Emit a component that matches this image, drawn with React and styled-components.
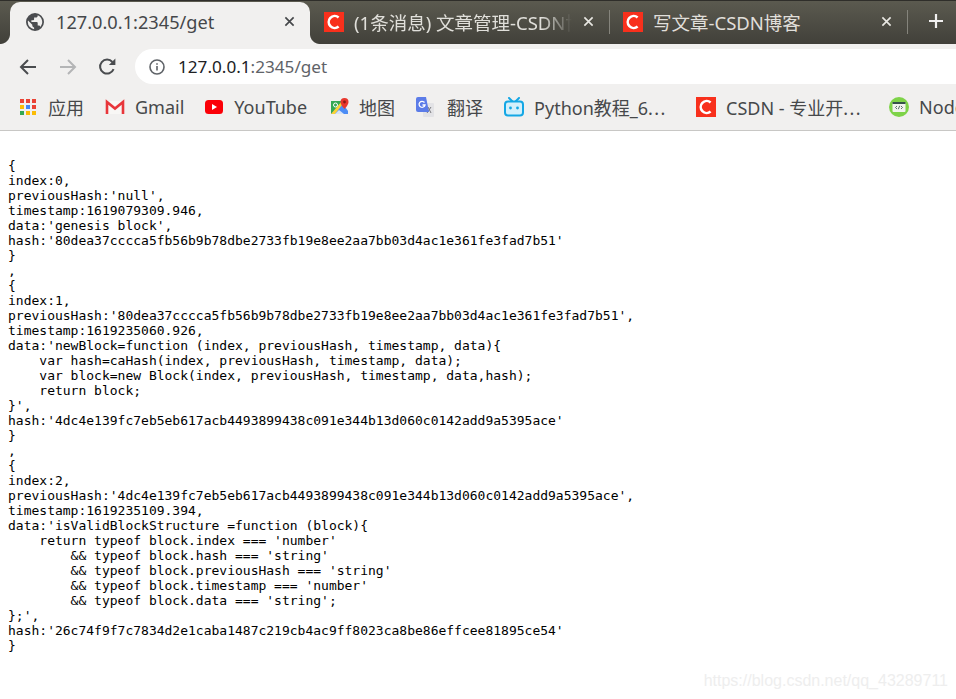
import React from "react";
import styled, { createGlobalStyle } from "styled-components";

const GlobalStyle = createGlobalStyle`
  html, body {
    margin: 0;
    padding: 0;
    background: #fff;
  }
`;

const Window = styled.div`
  position: relative;
  width: 956px;
  height: 699px;
  overflow: hidden;
  font-family: "Noto Sans", "Noto Sans CJK SC", sans-serif;
`;

const TabStrip = styled.div`
  display: flex;
  height: 44px;
  box-sizing: border-box;
  padding: 1px 0 0 10px;
  border-top: 1px solid #2f2e2a;
  background: linear-gradient(#5b5a4f, #41403a);
`;

const Tab = styled.div`
  position: relative;
  display: flex;
  align-items: center;
  flex: none;
  box-sizing: border-box;
  width: ${(p) => p.$width}px;
  height: 42px;
  padding: 0 15px 3px ${(p) => p.$left}px;
  border-radius: 10px 10px 0 0;
  background: ${(p) => (p.$active ? "#f1f0ef" : "transparent")};
  color: ${(p) => (p.$active ? "#45474a" : "#e0dfda")};
  font-size: ${(p) => (p.$active ? 18.2 : 18.5)}px;

  ${(p) =>
    p.$active &&
    `
    &::before, &::after {
      content: "";
      position: absolute;
      bottom: 0;
      width: 10px;
      height: 10px;
    }
    &::before {
      left: -10px;
      background: radial-gradient(circle at 0 0, transparent 9.5px, #f1f0ef 10.5px);
    }
    &::after {
      right: -10px;
      background: radial-gradient(circle at 100% 0, transparent 9.5px, #f1f0ef 10.5px);
    }
  `}
`;

const TabTitle = styled.span`
  flex: 1;
  margin-left: ${(p) => p.$gap}px;
  margin-right: ${(p) => (p.$fade ? 11 : 0)}px;
  overflow: hidden;
  white-space: nowrap;
  -webkit-mask-image: ${(p) =>
    p.$fade ? "linear-gradient(to right, #000 86%, transparent)" : "none"};
  mask-image: ${(p) =>
    p.$fade ? "linear-gradient(to right, #000 86%, transparent)" : "none"};
`;

const Divider = styled.div`
  flex: none;
  align-self: center;
  width: 1px;
  height: 24px;
  margin-top: -2px;
  background: #85847c;
`;

const NewTab = styled.div`
  display: flex;
  align-items: center;
  height: 38px;
  margin-left: 20px;
`;

const Toolbar = styled.div`
  display: flex;
  align-items: center;
  height: 40px;
  padding: 5px 0 0 18px;
  box-sizing: border-box;
  background: #f1f0ef;
`;

const NavButton = styled.div`
  display: flex;
  width: 20px;
  height: 20px;
  margin-right: ${(p) => p.$gap}px;
`;

const Omnibox = styled.div`
  display: flex;
  align-items: center;
  flex: 1;
  height: 35px;
  padding-left: 14px;
  border-radius: 18px 0 0 18px;
  background: #fff;
  font-size: 17.15px;
`;

const UrlHost = styled.span`
  margin-left: 13px;
  color: #202124;
`;

const UrlPath = styled.span`
  color: #5f6368;
`;

const Bookmarks = styled.div`
  display: flex;
  align-items: center;
  gap: 21px;
  height: 47px;
  box-sizing: border-box;
  padding: 0 0 0 20px;
  border-bottom: 1px solid #c8c7c5;
  background: #f1f0ef;
  white-space: nowrap;
`;

const Bookmark = styled.div`
  display: flex;
  align-items: center;
  flex: none;
  gap: ${(p) => p.$gap || 10}px;
  margin-right: ${(p) => p.$after || 0}px;
  color: #46484a;
  font-size: 18px;
`;

const Label = styled.span`
  display: block;
  width: 137px;
`;

const Dots = styled.span`
  letter-spacing: 1.4px;
`;

const Output = styled.pre`
  margin: 0;
  padding: 27px 0 0 8px;
  color: #000;
  font-family: "DejaVu Sans Mono", monospace;
  font-size: 13px;
  line-height: 15px;
`;

const Watermark = styled.div`
  position: absolute;
  right: 8px;
  bottom: 9px;
  color: #eeeeee;
  font-family: "Liberation Sans", sans-serif;
  font-size: 16px;
`;

const CsdnIcon = () => (
  <svg width="20" height="20" viewBox="0 0 20 20">
    <rect width="20" height="20" fill="#f8301c" />
    <path d="M14.6 5.4A6 6 0 1 0 14.6 14.6" fill="none" stroke="#fff" strokeWidth="2.6" />
  </svg>
);

const CloseIcon = ({ color }) => (
  <svg width="11" height="11" viewBox="0 0 12 12">
    <path d="M1.5 1.5l9 9M10.5 1.5l-9 9" stroke={color} strokeWidth="1.8" />
  </svg>
);

const GlobeIcon = () => (
  <svg width="18" height="18" viewBox="0 0 24 24">
    <path
      fill="#4a4c4f"
      d="M12 0a12 12 0 1 0 0 24 12 12 0 0 0 0-24zM10.800 21.500A9.600 9.600 0 0 1 2.400 12c0-.7.100-1.500.300-2.100L8.400 15.600v1.200c0 1.300 1.100 2.400 2.400 2.400v2.300zm8.300-3c-.3-1-1.200-1.700-2.300-1.700h-1.200v-3.600c0-.7-.5-1.200-1.200-1.200H7.200V9.600h2.400c.7 0 1.200-.5 1.200-1.200V6h2.400c1.300 0 2.400-1.100 2.400-2.400v-.5a9.600 9.600 0 0 1 3.500 15.400z"
    />
  </svg>
);

const ArrowIcon = ({ color, flip }) => (
  <svg width="20" height="20" viewBox="0 0 20 20" style={{ transform: flip ? "scaleX(-1)" : "none" }}>
    <path d="M18 10H3M10 3l-7 7 7 7" fill="none" stroke={color} strokeWidth="2" />
  </svg>
);

const ReloadIcon = () => (
  <svg width="20" height="20" viewBox="0 0 20 20">
    <path d="M15.600 12.200A7 7 0 1 1 14.400 5" fill="none" stroke="#4a4c4f" strokeWidth="2" />
    <path d="M17.400 1.500V8h-6.500z" fill="#4a4c4f" />
  </svg>
);

const InfoIcon = () => (
  <svg width="16" height="16" viewBox="0 0 16 16">
    <circle cx="8" cy="8" r="7" fill="none" stroke="#5f6368" strokeWidth="1.600" />
    <path d="M7.200 7h1.600v4.600H7.200zM7.200 4.200h1.600v1.600H7.200z" fill="#5f6368" />
  </svg>
);

const PlusIcon = () => (
  <svg width="16" height="16" viewBox="0 0 16 16">
    <path d="M8 1v14M1 8h14" stroke="#f1f0ef" strokeWidth="2.200" />
  </svg>
);

const appColors = [
  "#ea4335", "#ea4335", "#ea4335",
  "#fbbc05", "#4285f4", "#ea4335",
  "#34a853", "#fbbc05", "#fbbc05",
];

const AppsIcon = () => (
  <svg width="16" height="16" viewBox="0 0 16 16">
    {appColors.map((c, i) => (
      <rect key={i} x={(i % 3) * 6} y={Math.floor(i / 3) * 6} width="4" height="4" fill={c} />
    ))}
  </svg>
);

const GmailIcon = () => (
  <svg width="20" height="16" viewBox="0 0 20 16">
    <path d="M1 2h18v13H1z" fill="#f8f7f5" />
    <path d="M2 15V3l8 6.500L18 3v12" fill="none" stroke="#e8363b" strokeWidth="2.600" />
  </svg>
);

const YoutubeIcon = () => (
  <svg width="18" height="14" viewBox="0 0 18 14">
    <rect width="18" height="14" rx="3.500" fill="#fb0007" />
    <path d="M7 4l5 3-5 3z" fill="#fff" />
  </svg>
);

const MapsIcon = () => (
  <svg width="18" height="18" viewBox="0 0 18 18">
    <path d="M0 3h11v13H0z" fill="#35a853" />
    <path d="M0 16L9 6h3l5 7v3z" fill="#4d8df5" />
    <path d="M0 16L11 3v4L4 16z" fill="#fbd335" />
    <path d="M4 16l4-4 5 4z" fill="#d9e5f7" />
    <circle cx="4.500" cy="7" r="2" fill="none" stroke="#fff" strokeWidth="1" />
    <path d="M13.500 0a4 4 0 0 1 4 4c0 3-4 7-4 7s-4-4-4-7a4 4 0 0 1 4-4z" fill="#e8372d" />
    <circle cx="13.500" cy="4" r="1.400" fill="#8c1a12" />
  </svg>
);

const TranslateIcon = () => (
  <svg width="18" height="20" viewBox="0 0 18 20">
    <rect x="7" y="6" width="11" height="14" rx="1" fill="#e3e3e6" />
    <path d="M12 10l3 6M15 10l-4 6" stroke="#77787c" strokeWidth="1" />
    <path d="M2 0h8l3 15H2a2 2 0 0 1-2-2V2a2 2 0 0 1 2-2z" fill="#5c7ce8" />
    <path d="M8.500 5.500a3 3 0 1 0 .5 2.500H6.500" fill="none" stroke="#fff" strokeWidth="1.300" />
  </svg>
);

const BiliIcon = () => (
  <svg width="20" height="20" viewBox="0 0 20 20">
    <path d="M5 1l3 3M15 1l-3 3" stroke="#14a7e5" strokeWidth="2" strokeLinecap="round" />
    <rect x="1" y="4.500" width="18" height="14" rx="3" fill="#d5f0fb" stroke="#14a7e5" strokeWidth="2" />
    <circle cx="6.500" cy="11" r="1.400" fill="#14a7e5" />
    <circle cx="13.500" cy="11" r="1.400" fill="#14a7e5" />
  </svg>
);

const NodeIcon = () => (
  <svg width="20" height="20" viewBox="0 0 20 20">
    <circle cx="10" cy="10" r="10" fill="#7ed348" />
    <rect x="3.500" y="5" width="13" height="10" rx="1" fill="#f1f3ee" />
    <rect x="3.500" y="5" width="13" height="2" fill="#35524a" />
    <path d="M8 9l-1.500 1.500L8 12M12 9l1.500 1.500L12 12M10.700 8.800l-1.400 3.400" fill="none" stroke="#35524a" strokeWidth=".8" />
  </svg>
);

const output = `{
index:0,
previousHash:'null',
timestamp:1619079309.946,
data:'genesis block',
hash:'80dea37cccca5fb56b9b78dbe2733fb19e8ee2aa7bb03d4ac1e361fe3fad7b51'
}
,
{
index:1,
previousHash:'80dea37cccca5fb56b9b78dbe2733fb19e8ee2aa7bb03d4ac1e361fe3fad7b51',
timestamp:1619235060.926,
data:'newBlock=function (index, previousHash, timestamp, data){
    var hash=caHash(index, previousHash, timestamp, data);
    var block=new Block(index, previousHash, timestamp, data,hash);
    return block;
}',
hash:'4dc4e139fc7eb5eb617acb4493899438c091e344b13d060c0142add9a5395ace'
}
,
{
index:2,
previousHash:'4dc4e139fc7eb5eb617acb4493899438c091e344b13d060c0142add9a5395ace',
timestamp:1619235109.394,
data:'isValidBlockStructure =function (block){
    return typeof block.index === 'number'
        && typeof block.hash === 'string'
        && typeof block.previousHash === 'string'
        && typeof block.timestamp === 'number'
        && typeof block.data === 'string';
};',
hash:'26c74f9f7c7834d2e1caba1487c219cb4ac9ff8023ca8be86effcee81895ce54'
}`;

export default function App() {
  return (
    <Window>
      <GlobalStyle />
      <TabStrip>
        <Tab $active $width={300} $left={16}>
          <GlobeIcon />
          <TabTitle $gap={12}>127.0.0.1:2345/get</TabTitle>
          <CloseIcon color="#45474a" />
        </Tab>
        <Tab $width={299} $left={14}>
          <CsdnIcon />
          <TabTitle $gap={10} $fade>(1条消息) 文章管理-CSDN博客</TabTitle>
          <CloseIcon color="#e8e7e2" />
        </Tab>
        <Divider />
        <Tab $width={297} $left={13}>
          <CsdnIcon />
          <TabTitle $gap={10}>写文章-CSDN博客</TabTitle>
          <CloseIcon color="#e8e7e2" />
        </Tab>
        <Divider />
        <NewTab>
          <PlusIcon />
        </NewTab>
      </TabStrip>
      <Toolbar>
        <NavButton $gap={20}><ArrowIcon color="#4a4c4f" /></NavButton>
        <NavButton $gap={20}><ArrowIcon color="#b4b5b6" flip /></NavButton>
        <NavButton $gap={17}><ReloadIcon /></NavButton>
        <Omnibox>
          <InfoIcon />
          <UrlHost>127.0.0.1<UrlPath>:2345/get</UrlPath></UrlHost>
        </Omnibox>
      </Toolbar>
      <Bookmarks>
        <Bookmark $gap={12}><AppsIcon />应用</Bookmark>
        <Bookmark><GmailIcon />Gmail</Bookmark>
        <Bookmark $gap={11} $after={3}><YoutubeIcon />YouTube</Bookmark>
        <Bookmark><MapsIcon />地图</Bookmark>
        <Bookmark $gap={13}><TranslateIcon />翻译</Bookmark>
        <Bookmark $after={4}><BiliIcon /><Label>Python教程_6<Dots>...</Dots></Label></Bookmark>
        <Bookmark $after={5}><CsdnIcon /><Label>CSDN - 专业开<Dots>...</Dots></Label></Bookmark>
        <Bookmark><NodeIcon />Node</Bookmark>
      </Bookmarks>
      <Output>{output}</Output>
      <Watermark>https://blog.csdn.net/qq_43289711</Watermark>
    </Window>
  );
}
